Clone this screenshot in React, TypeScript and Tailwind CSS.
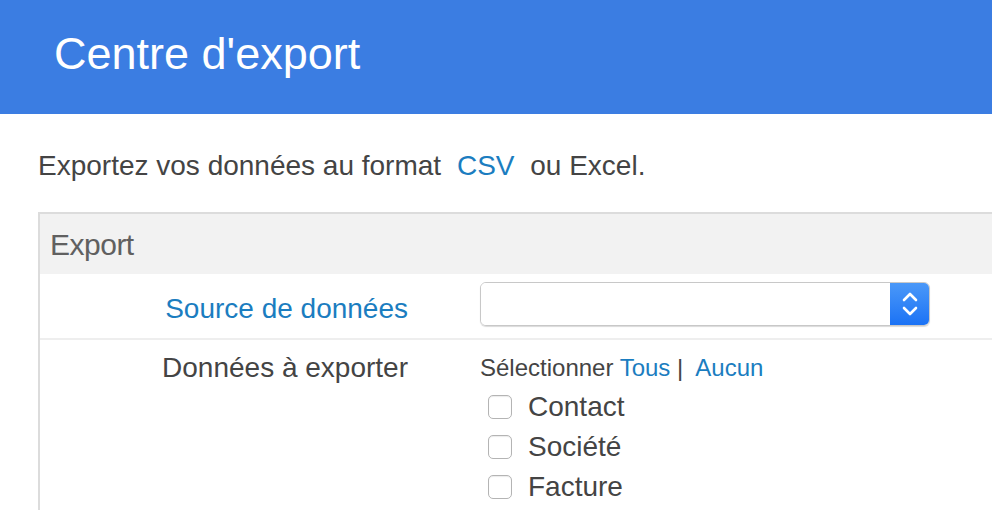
export default function App() {
  const types = ["Contact", "Société", "Facture"];

  return (
    <div className="w-[992px] h-[510px] overflow-hidden bg-white text-[#444] font-['Liberation_Sans',Arial,sans-serif]">
      <div className="h-[114px] bg-[#3b7de2] flex items-center pl-[54px] pb-[8px]">
        <h1 className="text-white text-[45px] leading-none">Centre d'export</h1>
      </div>

      <div className="pl-[38px] pt-[38px]">
        <p className="text-[28px] leading-[28px] mb-[32px]">
          Exportez vos données au format <span className="text-[#1b7dc0] mx-[8px]">CSV</span> ou Excel.
        </p>

        <div className="w-[1000px] border-l-2 border-t-2 border-[#dcdcdc]">
          <div className="h-[60px] bg-[#f2f2f2] flex items-center pl-[10px]">
            <span className="text-[30px] text-[#606060] tracking-[-0.5px]">Export</span>
          </div>

          <div className="h-[66px] border-b-2 border-[#eeeeee] flex items-start pt-[8px]">
            <div className="w-[368px] text-right text-[#1b7dc0] text-[28px] leading-none pt-[13px]">Source de données</div>
            <div className="ml-[72px] w-[450px] h-[44px] flex rounded-[6px] border border-[#c8c8c8] shadow-[0_1px_1px_rgba(0,0,0,0.15)] overflow-hidden">
              <div className="flex-1 bg-white"></div>
              <div className="w-[39px] bg-gradient-to-b from-[#4a98f8] to-[#1a72f5] flex items-center justify-center">
                <svg width="18" height="30" viewBox="0 0 18 30" fill="none" stroke="white" strokeWidth="2.6" strokeLinecap="round" strokeLinejoin="round">
                  <path d="M3 11 L9 5 L15 11" />
                  <path d="M3 19 L9 25 L15 19" />
                </svg>
              </div>
            </div>
          </div>

          <div className="flex pt-[14px] pb-[20px]">
            <div className="w-[368px] text-right text-[28px] leading-[28px]">Données à exporter</div>
            <div className="ml-[72px]">
              <div className="text-[24px] leading-[28px]">
                Sélectionner <span className="text-[#1b7dc0]">Tous</span> |&nbsp; <span className="text-[#1b7dc0]">Aucun</span>
              </div>
              <div className="flex flex-col pt-[5px]">
                {types.map((t) => (
                  <label key={t} className="h-[40px] flex items-center pl-[8px]">
                    <span className="w-[24px] h-[24px] rounded-[5px] border border-[#b4b4b4] bg-white shadow-[inset_0_1px_1px_rgba(0,0,0,0.08)]"></span>
                    <span className="ml-[16px] text-[28px] leading-none">{t}</span>
                  </label>
                ))}
              </div>
            </div>
          </div>
        </div>
      </div>
    </div>
  );
}
